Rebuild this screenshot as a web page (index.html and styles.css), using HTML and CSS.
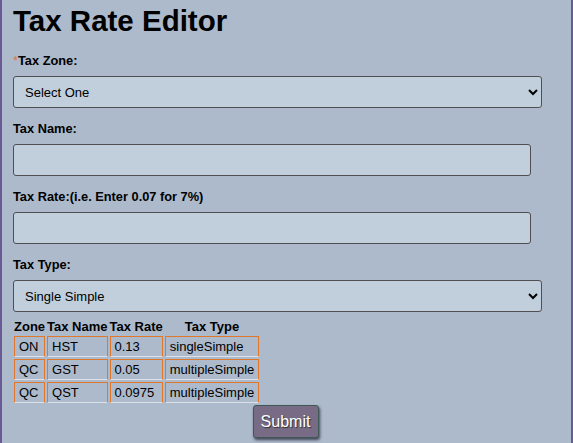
FILE: index.html
```html
<!DOCTYPE html>
<html>
<head>
<meta charset="utf-8">
<link rel="stylesheet" href="styles.css">
</head>
<body>
<div class="page">
  <h1 class="title">Tax Rate Editor</h1>
  <form class="form">
    <div class="field">
      <label class="label"><span class="req">*</span>Tax Zone:</label>
      <select class="select"><option>Select One</option></select>
    </div>
    <div class="field">
      <label class="label">Tax Name:</label>
      <input class="input" type="text">
    </div>
    <div class="field">
      <label class="label">Tax Rate:(i.e. Enter 0.07 for 7%)</label>
      <input class="input" type="text">
    </div>
    <div class="field last">
      <label class="label">Tax Type:</label>
      <select class="select"><option>Single Simple</option></select>
    </div>
    <table class="rates">
      <thead>
        <tr><th>Zone</th><th>Tax Name</th><th>Tax Rate</th><th>Tax Type</th></tr>
      </thead>
      <tbody>
        <tr><td>ON</td><td>HST</td><td>0.13</td><td>singleSimple</td></tr>
        <tr><td>QC</td><td>GST</td><td>0.05</td><td>multipleSimple</td></tr>
        <tr><td>QC</td><td>QST</td><td>0.0975</td><td>multipleSimple</td></tr>
      </tbody>
    </table>
    <div class="actions">
      <button class="submit" type="button">Submit</button>
    </div>
  </form>
</div>
</body>
</html>
```
FILE: styles.css
```css
html, body {
  margin: 0;
  padding: 0;
  background: #adbacb;
}
.page {
  box-sizing: border-box;
  height: 443px;
  border-left: 2px solid #6a5b96;
  border-right: 2px solid #6a5b96;
  padding: 4px 11px 0 11px;
  font-family: "Liberation Sans", Arial, sans-serif;
  color: #000;
}
.title {
  margin: 0;
  font-size: 29.5px;
  line-height: 34px;
  font-weight: bold;
}
.form {
  margin: 15px 0 0 0;
}
.field {
  display: flex;
  flex-direction: column;
  align-items: flex-start;
  margin-bottom: 13px;
}
.field.last {
  margin-bottom: 5px;
}
.label {
  font-size: 12.8px;
  line-height: 15px;
  font-weight: bold;
  margin-bottom: 8px;
}
.req {
  color: #e0763a;
  font-weight: normal;
}
.select {
  box-sizing: border-box;
  width: 529px;
  height: 32px;
  margin: 0;
  padding: 0 7px;
  border: 1px solid #4f4f4f;
  border-radius: 3px;
  background-color: #c1cfdc;
  color: #000;
  font-family: "Liberation Sans", Arial, sans-serif;
  font-size: 13px;
}
.input {
  box-sizing: border-box;
  width: 518px;
  height: 32px;
  margin: 0;
  padding: 0 8px;
  border: 1px solid #4f4f4f;
  border-radius: 3px;
  background-color: #c1cfdc;
  font-family: "Liberation Sans", Arial, sans-serif;
  font-size: 13px;
}
.rates {
  border-collapse: separate;
  border-spacing: 2px 2px;
  margin-left: -1px;
  font-size: 13px;
  line-height: 15px;
}
.rates th {
  padding: 0;
  font-weight: bold;
  text-align: center;
}
.rates td {
  padding: 2px 4px;
  text-align: left;
  border-top: 1px solid #e0782c;
  border-left: 1px solid #e0782c;
  border-right: 1px solid #e0782c;
  border-bottom: 1px solid #dde2ea;
}
.actions {
  display: flex;
  justify-content: center;
  margin-right: 2px;
}
.submit {
  box-sizing: border-box;
  width: 66px;
  height: 33px;
  padding: 0;
  border: 1px solid #3f5a56;
  border-radius: 3px;
  background: #776b86;
  color: #fff;
  font-family: "Liberation Sans", Arial, sans-serif;
  font-size: 16px;
  text-shadow: 1px 1px 1px #333;
  box-shadow: 1px 2px 3px rgba(20, 20, 40, 0.7);
}
```
